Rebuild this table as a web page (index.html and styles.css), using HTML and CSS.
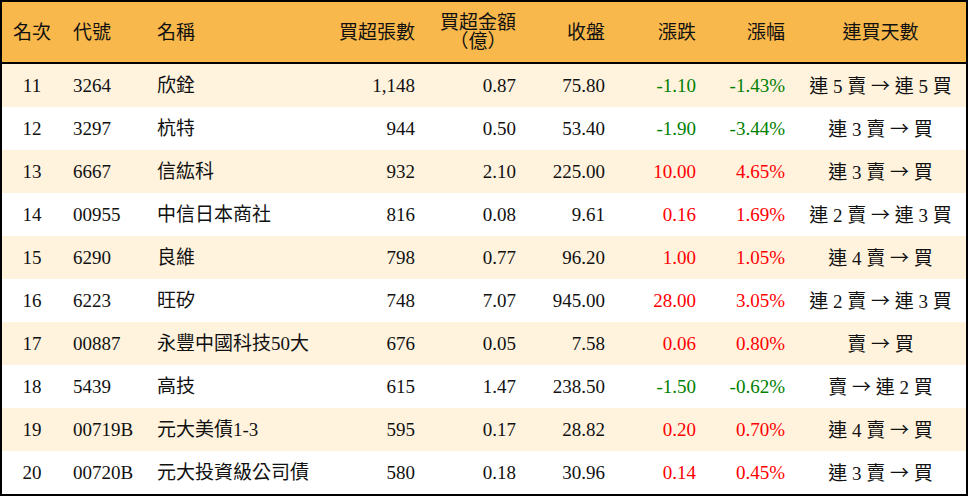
FILE: index.html
```html
<!DOCTYPE html>
<html lang="zh-Hant">
<head>
<meta charset="utf-8">
<title>買超排行</title>
<link rel="stylesheet" href="styles.css">
</head>
<body>
<div class="frame">
<table class="rank">
  <colgroup>
    <col class="c1"><col class="c2"><col class="c3"><col class="c4"><col class="c5"><col class="c6"><col class="c7"><col class="c8"><col class="c9">
  </colgroup>
  <thead>
    <tr>
      <th class="ctr">名次</th>
      <th class="lft">代號</th>
      <th class="lft">名稱</th>
      <th class="num">買超張數</th>
      <th class="num"><span class="stack">買超金額<br>（億）</span></th>
      <th class="num">收盤</th>
      <th class="num">漲跌</th>
      <th class="num">漲幅</th>
      <th class="ctr">連買天數</th>
    </tr>
  </thead>
  <tbody>
    <tr class="alt"><td class="ctr">11</td><td class="lft">3264</td><td class="lft">欣銓</td><td class="num">1,148</td><td class="num">0.87</td><td class="num">75.80</td><td class="num dn">-1.10</td><td class="num dn">-1.43%</td><td class="ctr">連 5 賣 <span class="arr">→</span> 連 5 買</td></tr>
    <tr><td class="ctr">12</td><td class="lft">3297</td><td class="lft">杭特</td><td class="num">944</td><td class="num">0.50</td><td class="num">53.40</td><td class="num dn">-1.90</td><td class="num dn">-3.44%</td><td class="ctr">連 3 賣 <span class="arr">→</span> 買</td></tr>
    <tr class="alt"><td class="ctr">13</td><td class="lft">6667</td><td class="lft">信紘科</td><td class="num">932</td><td class="num">2.10</td><td class="num">225.00</td><td class="num up">10.00</td><td class="num up">4.65%</td><td class="ctr">連 3 賣 <span class="arr">→</span> 買</td></tr>
    <tr><td class="ctr">14</td><td class="lft">00955</td><td class="lft">中信日本商社</td><td class="num">816</td><td class="num">0.08</td><td class="num">9.61</td><td class="num up">0.16</td><td class="num up">1.69%</td><td class="ctr">連 2 賣 <span class="arr">→</span> 連 3 買</td></tr>
    <tr class="alt"><td class="ctr">15</td><td class="lft">6290</td><td class="lft">良維</td><td class="num">798</td><td class="num">0.77</td><td class="num">96.20</td><td class="num up">1.00</td><td class="num up">1.05%</td><td class="ctr">連 4 賣 <span class="arr">→</span> 買</td></tr>
    <tr><td class="ctr">16</td><td class="lft">6223</td><td class="lft">旺矽</td><td class="num">748</td><td class="num">7.07</td><td class="num">945.00</td><td class="num up">28.00</td><td class="num up">3.05%</td><td class="ctr">連 2 賣 <span class="arr">→</span> 連 3 買</td></tr>
    <tr class="alt"><td class="ctr">17</td><td class="lft">00887</td><td class="lft">永豐中國科技50大</td><td class="num">676</td><td class="num">0.05</td><td class="num">7.58</td><td class="num up">0.06</td><td class="num up">0.80%</td><td class="ctr">賣 <span class="arr">→</span> 買</td></tr>
    <tr><td class="ctr">18</td><td class="lft">5439</td><td class="lft">高技</td><td class="num">615</td><td class="num">1.47</td><td class="num">238.50</td><td class="num dn">-1.50</td><td class="num dn">-0.62%</td><td class="ctr">賣 <span class="arr">→</span> 連 2 買</td></tr>
    <tr class="alt"><td class="ctr">19</td><td class="lft">00719B</td><td class="lft">元大美債1-3</td><td class="num">595</td><td class="num">0.17</td><td class="num">28.82</td><td class="num up">0.20</td><td class="num up">0.70%</td><td class="ctr">連 4 賣 <span class="arr">→</span> 買</td></tr>
    <tr><td class="ctr">20</td><td class="lft">00720B</td><td class="lft">元大投資級公司債</td><td class="num">580</td><td class="num">0.18</td><td class="num">30.96</td><td class="num up">0.14</td><td class="num up">0.45%</td><td class="ctr">連 3 賣 <span class="arr">→</span> 買</td></tr>
  </tbody>
</table>
</div>
</body>
</html>
```
FILE: styles.css
```css
html, body {
  margin: 0;
  padding: 0;
  background: #ffffff;
}

.frame {
  width: 968px;
  height: 496px;
  box-sizing: border-box;
  border: 2px solid #000;
  overflow: hidden;
}

.rank {
  width: 964px;
  table-layout: fixed;
  border-collapse: separate;
  border-spacing: 0;
  font-family: "Liberation Serif", "Noto Sans CJK TC", serif;
  font-size: 19px;
  color: #111;
}

.c1 { width: 60px; }
.c2 { width: 83px; }
.c3 { width: 185px; }
.c4 { width: 95px; }
.c5 { width: 101px; }
.c6 { width: 89px; }
.c7 { width: 91px; }
.c8 { width: 89px; }
.c9 { width: 171px; }

.rank th {
  height: 60px;
  padding: 0;
  background: #f9b84b;
  border-bottom: 2px solid #000;
  font-weight: normal;
  line-height: 19px;
  vertical-align: middle;
  white-space: nowrap;
}

.rank td {
  height: 43px;
  padding: 0;
  line-height: 1;
  vertical-align: middle;
  white-space: nowrap;
}

.rank tr.alt td {
  background: #fff3de;
}

.ctr { text-align: center; }
.lft { text-align: left; padding-left: 11px !important; }
.rank td:nth-child(3), .rank th:nth-child(3) { padding-left: 12px !important; }
.num { text-align: right; padding-right: 10px !important; }

.stack {
  display: inline-block;
  text-align: center;
}

.arr {
  font-family: "Noto Sans CJK TC", sans-serif;
  font-size: 19px;
}

.dn { color: #008000; }
.up { color: #ff0000; }
```
